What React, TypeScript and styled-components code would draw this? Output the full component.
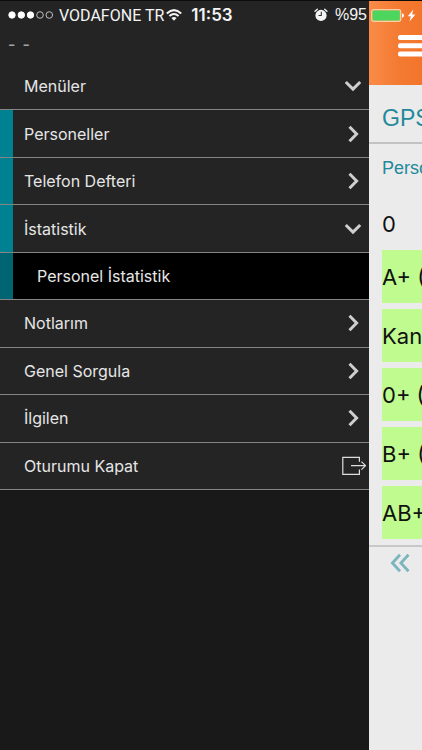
import React from "react";
import styled, { createGlobalStyle, css } from "styled-components";

const Global = createGlobalStyle`
  *, *::before, *::after { box-sizing: border-box; }
  body {
    margin: 0;
    background: #191919;
    font-family: Inter, "Noto Sans", sans-serif;
  }
  button { font: inherit; color: inherit; border: 0; margin: 0; background: none; padding: 0; cursor: pointer; }
  svg { display: block; flex: none; }
`;

const Screen = styled.div`
  position: relative;
  display: flex;
  min-height: 100vh;
  overflow: hidden;
`;

const StatusBar = styled.div`
  position: absolute;
  inset: 0 0 auto;
  display: grid;
  grid-template-columns: 1fr auto 1fr;
  align-items: center;
  height: 29px;
  padding: 0 6px 0 8px;
  border-top: 1px solid #0c0c0c;
  color: #f4f4f4;
  font-family: "Liberation Sans", Arial, sans-serif;
  font-size: 16px;
  white-space: nowrap;
`;

const StatusGroup = styled.div<{ $end?: boolean }>`
  display: flex;
  align-items: center;
  gap: ${(p) => (p.$end ? 3 : 2)}px;
  min-width: 0;
  justify-content: ${(p) => (p.$end ? "flex-end" : "flex-start")};
`;

const Carrier = styled.span`
  margin-left: 3px;
  font-family: Roboto, sans-serif;
`;

const Percent = styled.span`
  margin: 0 1px 0 4px;
`;

const Clock = styled.time`
  font-family: Inter, sans-serif;
  font-size: 17px;
  font-weight: 600;
`;

const Drawer = styled.aside`
  flex: 1;
  min-width: 0;
  background: #191919;
  color: #e6e6e6;
`;

const UserLine = styled.div`
  display: flex;
  gap: 7px;
  height: 63px;
  padding: 34px 8px 0;
  background: #242424;
  color: #a4a4a4;
  font-size: 16px;
  font-weight: 500;
  line-height: 20px;
`;

const MenuList = styled.ul`
  display: grid;
  grid-auto-rows: 1fr;
  min-height: 427px;
  margin: 0;
  padding: 0;
  list-style: none;
`;

const MenuItem = styled.li<{ $tone?: "teal" | "deep" }>`
  display: flex;
  border-bottom: 1px solid #858585;
  background: ${(p) => (p.$tone === "deep" ? "#000" : "#242424")};
  ${(p) =>
    p.$tone &&
    css`
      &::before {
        content: "";
        width: 13px;
        margin-right: -13px;
        background: ${p.$tone === "deep" ? "#006572" : "#008191"};
      }
    `}
`;

const MenuButton = styled.button<{ $nested?: boolean }>`
  flex: 1;
  display: flex;
  align-items: center;
  justify-content: space-between;
  padding: 0 2px 0 ${(p) => (p.$nested ? 37 : 24)}px;
  font-size: 16px;
  line-height: 24px;
  text-align: left;
`;

const IconSlot = styled.span`
  display: flex;
  justify-content: center;
  width: 28px;
`;

const Peek = styled.main`
  flex: 0 0 53px;
  overflow: hidden;
  background: #ebebeb;
  color: #111;
  white-space: nowrap;
`;

const AppBar = styled.header`
  display: flex;
  align-items: flex-start;
  height: 85px;
  padding: 34px 0 0 29px;
  background: linear-gradient(90deg, #f98b48 0, #f47a32 30px, #f3752b 100%);
`;

const Title = styled.h1`
  margin: 0;
  padding: 4px 0 0 13px;
  height: 59px;
  border-bottom: 2px solid #c2c2c2;
  color: #22899a;
  font: 400 23px/58px "Liberation Sans", Arial, sans-serif;
`;

const Column = styled.h2`
  margin: 0;
  padding: 0 13px;
  color: #22899a;
  font: 400 18px/48px "Liberation Sans", Arial, sans-serif;
`;

const Groups = styled.ul`
  display: grid;
  gap: 6px;
  margin: 0;
  padding: 5px 0 6px 13px;
  border-bottom: 2px solid #c8c8c8;
  list-style: none;
`;

const Group = styled.li<{ $plain?: boolean }>`
  height: ${(p) => (p.$plain ? 47 : 53)}px;
  background: ${(p) => (p.$plain ? "transparent" : "#c0fb90")};
  font-size: 22px;
  line-height: 54px;
`;

const Pager = styled.button`
  display: block;
  padding: 6px 21px;
`;

const Dots = () => (
  <svg width="46" height="10" viewBox="0 0 46 10" fill="#fff" stroke="#fff">
    <circle cx="4" cy="5" r="3.2" />
    <circle cx="13.3" cy="5" r="3.2" />
    <circle cx="22.5" cy="5" r="3.2" />
    <g fill="none" stroke="#bdbdbd">
      <circle cx="32" cy="5" r="3.3" />
      <circle cx="41.3" cy="5" r="3.3" />
    </g>
  </svg>
);

const Wifi = () => (
  <svg width="16" height="12" viewBox="0 0 16 12" fill="none" stroke="#f4f4f4" strokeWidth="2">
    <path d="M.8 4.4Q8-2.2 15.2 4.4M3.4 7.1Q8 3 12.6 7.1" />
    <path d="M5.4 8.9Q8 6.9 10.6 8.9L8 11.7Z" fill="#f4f4f4" stroke="none" />
  </svg>
);

const Alarm = () => (
  <svg width="14" height="14" viewBox="0 0 14 14">
    <path d="M1 3.3 3.3 1.2M13 3.3 10.7 1.2" stroke="#f4f4f4" strokeWidth="1.3" strokeLinecap="round" />
    <circle cx="7" cy="7.4" r="5.6" fill="#f4f4f4" />
    <path d="M7.3 3.8v3.7H4.5" fill="none" stroke="#333" strokeWidth="1.1" />
  </svg>
);

const Battery = () => (
  <svg width="33" height="13" viewBox="0 0 33 13">
    <rect x=".7" y=".7" width="29" height="11.6" rx="2" fill="#f7a767" stroke="#f8d0a6" strokeWidth="1.2" />
    <rect x="1.6" y="1.6" width="27.2" height="9.8" rx=".8" fill="#4cd65d" />
    <path d="M31 4.2q2 .5 2 2.3t-2 2.3Z" fill="#fff" />
  </svg>
);

const Bolt = () => (
  <svg width="9" height="13" viewBox="0 0 9 13" fill="#fff">
    <path d="M6.3.6.8 7.2h3L2.5 12.4 8.4 5.5H5.1Z" />
  </svg>
);

const Burger = () => (
  <svg width="31" height="23" viewBox="0 0 31 23" fill="#fff">
    <rect y="1" width="31" height="5" rx="2" />
    <rect y="9.3" width="31" height="5" rx="2" />
    <rect y="17.6" width="31" height="5" rx="2" />
  </svg>
);

const Down = () => (
  <svg width="18" height="18" viewBox="0 0 18 18" fill="none" stroke="#cfcfcf" strokeWidth="3">
    <path d="M1.8 5 9 12.1 16.2 5" />
  </svg>
);

const Right = () => (
  <svg width="18" height="18" viewBox="0 0 18 18" fill="none" stroke="#cfcfcf" strokeWidth="3">
    <path d="M5.5 1.8 12.6 9 5.5 16.2" />
  </svg>
);

const Exit = () => (
  <svg width="26" height="20" viewBox="0 0 26 20" fill="none" stroke="#dedede" strokeWidth="1.2">
    <path d="M19.4 5.8V1.3H2.8v17h16.6v-4.7M11 9.6h14.6M21.4 5.6l4.2 4-4.2 4" />
  </svg>
);

const DoubleLeft = () => (
  <svg width="20" height="20" viewBox="0 0 20 20" fill="none" stroke="#7bb5bd" strokeWidth="2.8">
    <path d="M10 1.8 2.4 10l7.6 8.2M18.5 1.8 10.9 10l7.6 8.2" />
  </svg>
);

const icons = { down: Down, right: Right, exit: Exit };

type Entry = {
  label: string;
  icon?: keyof typeof icons;
  tone?: "teal" | "deep";
};

const entries: Entry[] = [
  { label: "Menüler", icon: "down" },
  { label: "Personeller", icon: "right", tone: "teal" },
  { label: "Telefon Defteri", icon: "right", tone: "teal" },
  { label: "İstatistik", icon: "down", tone: "teal" },
  { label: "Personel İstatistik", tone: "deep" },
  { label: "Notlarım", icon: "right" },
  { label: "Genel Sorgula", icon: "right" },
  { label: "İlgilen", icon: "right" },
  { label: "Oturumu Kapat", icon: "exit" },
];

const groups = ["0", "A+ (", "Kan", "0+ (", "B+ (", "AB+"];

export default function App() {
  return (
    <>
      <Global />
      <Screen>
        <Drawer>
          <UserLine>
            <span>-</span>
            <span>-</span>
          </UserLine>
          <nav>
            <MenuList>
              {entries.map(({ label, icon, tone }) => {
                const Icon = icon && icons[icon];
                return (
                  <MenuItem key={label} $tone={tone}>
                    <MenuButton type="button" $nested={tone === "deep"}>
                      {label}
                      {Icon && (
                        <IconSlot>
                          <Icon />
                        </IconSlot>
                      )}
                    </MenuButton>
                  </MenuItem>
                );
              })}
            </MenuList>
          </nav>
        </Drawer>
        <Peek>
          <AppBar>
            <button type="button" aria-label="Menü">
              <Burger />
            </button>
          </AppBar>
          <Title>GPS</Title>
          <Column>Perso</Column>
          <Groups>
            {groups.map((group, i) => (
              <Group key={group} $plain={i === 0}>
                {group}
              </Group>
            ))}
          </Groups>
          <Pager type="button" aria-label="Geri">
            <DoubleLeft />
          </Pager>
        </Peek>
        <StatusBar>
          <StatusGroup>
            <Dots />
            <Carrier>VODAFONE TR</Carrier>
            <Wifi />
          </StatusGroup>
          <Clock>11:53</Clock>
          <StatusGroup $end>
            <Alarm />
            <Percent>%95</Percent>
            <Battery />
            <Bolt />
          </StatusGroup>
        </StatusBar>
      </Screen>
    </>
  );
}
